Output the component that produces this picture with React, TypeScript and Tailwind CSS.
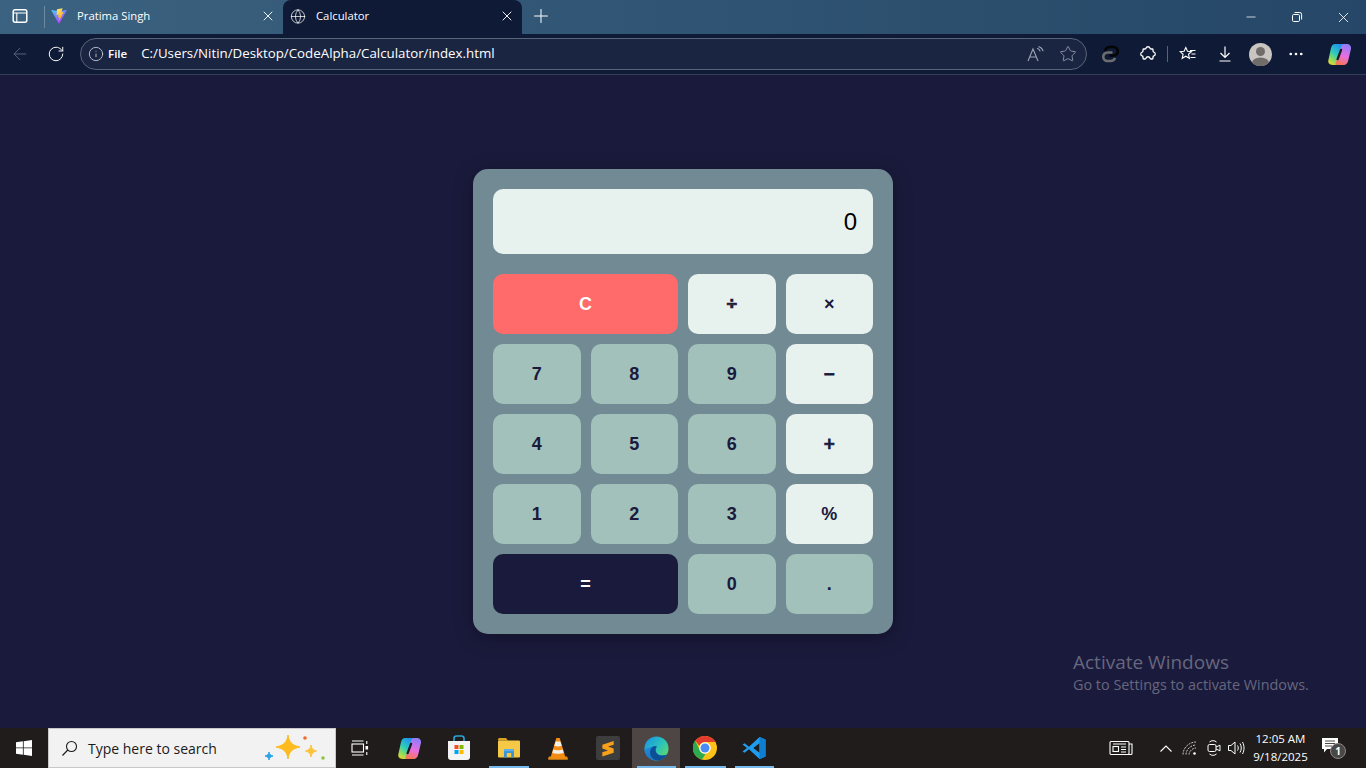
import React from "react";
import { ArrowLeft, Globe, Info, Minus, MoreHorizontal, Plus, RotateCw, Star, X } from "lucide-react";

const SEGOE = "font-['Open_Sans','Noto_Sans',sans-serif]";

function ViteLogo() {
  return (
    <svg width="18" height="18" viewBox="0 0 410 404">
      <defs>
        <linearGradient id="vg1" x1="0" y1="0" x2="0.6" y2="1">
          <stop offset="0" stopColor="#41d1ff" />
          <stop offset="1" stopColor="#bd34fe" />
        </linearGradient>
        <linearGradient id="vg2" x1="0" y1="0" x2="0.3" y2="1">
          <stop offset="0" stopColor="#ffea83" />
          <stop offset="1" stopColor="#ffa800" />
        </linearGradient>
      </defs>
      <path d="M399 63 215 392c-4 7-14 7-18 0L10 63c-4-7 2-16 11-15l184 33h7l180-33c9-1 15 8 11 15Z" fill="url(#vg1)" />
      <path d="M292 1 156 28c-2 0-4 2-4 5l-8 142c0 3 3 6 6 5l38-9c4-1 7 2 6 6l-11 55c-1 4 3 7 6 6l23-7c4-1 7 2 6 6l-18 86c-1 5 6 8 9 3l2-3 108-216c2-4-1-8-5-7l-39 7c-4 1-7-3-6-6l25-88c1-4-3-8-6-7Z" fill="url(#vg2)" />
    </svg>
  );
}

function TabsIcon() {
  return (
    <svg width="16" height="16" viewBox="0 0 16 16" fill="none" stroke="#fff" strokeWidth="1.5">
      <rect x="1.2" y="1.700" width="13.600" height="12.600" rx="2" />
      <path d="M1.500 5h13M4.800 5v9" strokeWidth="1.100" />
    </svg>
  );
}

function RestoreIcon() {
  return (
    <svg width="12" height="12" viewBox="0 0 12 12" fill="none" stroke="#fff" strokeWidth="1">
      <rect x="1.500" y="3.500" width="7" height="7" rx="1.200" />
      <path d="M3.600 1.500h5.200a1.800 1.800 0 0 1 1.800 1.800v5.200" />
    </svg>
  );
}

function ReadAloudIcon() {
  return (
    <svg width="18" height="16" viewBox="0 0 18 16" fill="none" stroke="#9aa3b2" strokeWidth="1.100">
      <path d="M1 15 6 3l5 12M2.800 11h6.400" />
      <path d="M10 2.200c1.600.4 2.800 1.600 3.200 3.200M11.500 0.600c2.300.5 4 2.300 4.600 4.600" />
    </svg>
  );
}

function ChainIcon() {
  return (
    <svg width="18" height="18" viewBox="0 0 18 18" fill="none" strokeWidth="2.600">
      <path d="M4 6c.6-2.500 2.500-4 5-4h3.500a4 4 0 0 1 0 8.500H8.500" stroke="#050505" />
      <path d="M11.500 7.500H6.500a4.200 4.200 0 0 0 0 8.500h3c2.200 0 3.900-1.200 4.500-3.200" stroke="#6e6e6e" />
    </svg>
  );
}

function PuzzleIcon() {
  return (
    <svg width="18" height="18" viewBox="0 0 18 18" fill="none" stroke="#fff" strokeWidth="1.300">
      <path d="M7 3.200a2.100 2.100 0 0 1 4 0c.1.500.5.800 1 .8h1.200c.5 0 .8.300.8.800V6c0 .5.300.9.800 1a2.100 2.100 0 0 1 0 4c-.5.100-.8.500-.8 1v1.200c0 .5-.3.800-.8.800H12c-.5 0-.9-.3-1-.8a2.100 2.100 0 0 0-4 0c-.1.500-.5.800-1 .8H4.800c-.5 0-.8-.3-.8-.8V12c0-.5-.3-.9-.8-1a2.100 2.100 0 0 1 0-4c.5-.1.800-.5.800-1V4.800c0-.5.300-.8.800-.8H6c.5 0 .9-.3 1-.8Z" />
    </svg>
  );
}

function FavoritesIcon() {
  return (
    <svg width="18" height="18" viewBox="0 0 18 18" fill="none" stroke="#fff" strokeWidth="1.100">
      <path d="m6.800 2.500 1.700 3.700 4 .4-3 2.700.9 4-3.600-2.100-3.600 2.100.9-4-3-2.700 4-.4Z" />
      <path d="M11 5.500h5.500M12.500 9h4M11.500 12.500h5" />
    </svg>
  );
}

function DownloadIcon() {
  return (
    <svg width="16" height="18" viewBox="0 0 16 18" fill="none" stroke="#fff" strokeWidth="1.200">
      <path d="M8 1.500v11M3.500 8 8 12.500 12.500 8M2.500 16h11" />
    </svg>
  );
}

function Avatar() {
  return (
    <div className="w-[23px] h-[23px] rounded-full overflow-hidden bg-[#c9c6c2]">
      <svg width="23" height="23" viewBox="0 0 23 23">
        <circle cx="11.500" cy="8.500" r="4.500" fill="#6f6c69" />
        <ellipse cx="11.500" cy="20" rx="8.500" ry="5.500" fill="#6f6c69" />
      </svg>
    </div>
  );
}

function CopilotIcon({ id }: { id: string }) {
  return (
    <svg width="25" height="25" viewBox="0 0 24 24">
      <defs>
        <linearGradient id={`${id}a`} x1="0.7" y1="0" x2="0.1" y2="1">
          <stop offset="0" stopColor="#1f8ff0" />
          <stop offset="0.45" stopColor="#2cc9c0" />
          <stop offset="0.75" stopColor="#8ede5a" />
          <stop offset="1" stopColor="#f7d430" />
        </linearGradient>
        <linearGradient id={`${id}b`} x1="0.6" y1="0" x2="0.3" y2="1">
          <stop offset="0" stopColor="#8f7cf8" />
          <stop offset="0.55" stopColor="#e86fe0" />
          <stop offset="1" stopColor="#f7764f" />
        </linearGradient>
      </defs>
      <path d="M8 2h7.500c1 0 1.500.7 1.200 1.600L11 20c-.5 1.500-1.500 2-3 2H5.500C2.500 22 .7 20 1.300 17.500L3.800 6C4.300 3.500 5.800 2 8 2Z" fill={`url(#${id}a)`} />
      <path d="M16 22H9.500c-1 0-1.500-.7-1.200-1.600L13.800 4c.5-1.500 1.500-2 3-2h2c2.900 0 4.800 2 4.200 4.600L20.300 18c-.5 2.500-2 4-4.300 4Z" fill={`url(#${id}b)`} />
      <path d="M13.500 7.500 10.200 16.500" stroke="#1a1820" strokeWidth="2.200" strokeLinecap="round" />
    </svg>
  );
}

function WindowsLogo() {
  return (
    <svg width="16" height="16" viewBox="0 0 16 16" fill="#fff">
      <path d="M0 2.300 6.900 1.300V7.500H0ZM7.700 1.200 16 0V7.500H7.700ZM0 8.300H6.900V14.700L0 13.700ZM7.700 8.300H16V16L7.700 14.800Z" />
    </svg>
  );
}

function SearchGlass() {
  return (
    <svg width="17" height="17" viewBox="0 0 17 17" fill="none" stroke="#1b1b1b" strokeWidth="1.100">
      <circle cx="10.500" cy="6.500" r="5" />
      <path d="M6.800 10 1.500 15.500" />
    </svg>
  );
}

function Sparkles() {
  return (
    <svg width="64" height="32" viewBox="0 0 64 32">
      <path d="M25 3c1 7 4 10.500 12 12-8 1.500-11 5-12 12-1-7-4-10.500-12-12 8-1.500 11-5 12-12Z" fill="#fdbb1f" stroke="#fdbb1f" strokeLinejoin="round" />
      <path d="M48 13c.5 3.500 1.800 5 5.500 6-3.700 1-5 2.500-5.500 6-.5-3.500-1.800-5-5.500-6 3.700-1 5-2.500 5.500-6Z" fill="#fdc33c" stroke="#fdc33c" strokeLinejoin="round" />
      <path d="M6 20c.4 2.300 1.200 3.200 4 4-2.800.8-3.600 1.700-4 4-.4-2.300-1.200-3.200-4-4 2.800-.8 3.600-1.700 4-4Z" fill="#2aa5ea" stroke="#2aa5ea" strokeLinejoin="round" />
      <circle cx="42" cy="6" r="1.800" fill="#ef6a2c" />
      <circle cx="60" cy="26" r="1.800" fill="#8cc63f" />
    </svg>
  );
}

function TaskViewIcon() {
  return (
    <svg width="18" height="16" viewBox="0 0 18 16" fill="none" stroke="#fff" strokeWidth="1.100">
      <rect x="1" y="4" width="11.500" height="8" />
      <path d="M1 1h11.500M1 15h11.500" />
      <path d="M15.800 1v3M15.800 12v3" />
      <rect x="14.500" y="6" width="2.600" height="3.500" fill="#fff" stroke="none" />
    </svg>
  );
}

function StoreIcon() {
  return (
    <svg width="24" height="26" viewBox="0 0 24 26">
      <path d="M7 6V3.500C7 2 8 1 9.500 1h5C16 1 17 2 17 3.500V6" fill="none" stroke="#2aa5d8" strokeWidth="1.600" />
      <path d="M1 6h22v16a3 3 0 0 1-3 3H4a3 3 0 0 1-3-3Z" fill="#f4f4f4" />
      <rect x="7.500" y="10" width="4" height="4" fill="#f25022" />
      <rect x="12.500" y="10" width="4" height="4" fill="#7fba00" />
      <rect x="7.500" y="15" width="4" height="4" fill="#00a4ef" />
      <rect x="12.500" y="15" width="4" height="4" fill="#ffb900" />
    </svg>
  );
}

function ExplorerIcon() {
  return (
    <svg width="22" height="20" viewBox="0 0 22 20">
      <path d="M0 1.500C0 .7.700 0 1.500 0H8l2 2.500H0Z" fill="#d9a21f" />
      <rect x="0" y="2.500" width="22" height="17" rx="1" fill="#f5c945" />
      <path d="M6 19.500v-6c0-1 .7-1.500 1.500-1.500h7c.8 0 1.500.5 1.500 1.500v6h-2.800v-4.500H8.800v4.500Z" fill="#3a93d8" />
      <rect x="6" y="11" width="10" height="2.200" fill="#5bb0ea" />
    </svg>
  );
}

function VlcIcon() {
  return (
    <svg width="20" height="23" viewBox="0 0 20 23">
      <path d="M1 19.500h18l1 2.200c0 .5-.5 1-1 1H1c-.5 0-1-.5-1-1Z" fill="#e38a12" />
      <path d="M8.300 1h3.400l5.800 19.500c-3 1.300-12 1.300-15 0Z" fill="#f28c13" />
      <path d="M7.600 4.500h4.800l1.300 4.300c-2 .8-5.400.8-7.400 0ZM5.300 12.500c2.500 1 6.900 1 9.400 0l1 3.500c-3 1.100-8.400 1.100-11.400 0Z" fill="#f1efe9" />
    </svg>
  );
}

function SublimeIcon() {
  return (
    <div className="w-6 h-6 rounded-[2px] bg-[#3d3d3d] flex items-center justify-center">
      <svg width="14" height="17" viewBox="0 0 14 18" fill="#f9a01b">
        <path d="M1 5 13 1v4L7 7l6 2v4.500L1 17.500v-4.500L7 11 1 9Z" />
      </svg>
    </div>
  );
}

function EdgeIcon() {
  return (
    <svg width="25" height="25" viewBox="0 0 25 25">
      <defs>
        <linearGradient id="eg1" x1="0.2" y1="0" x2="1" y2="0.7">
          <stop offset="0" stopColor="#1a9be0" />
          <stop offset="0.55" stopColor="#2cc3b8" />
          <stop offset="1" stopColor="#5bd86f" />
        </linearGradient>
        <linearGradient id="eg2" x1="0" y1="0" x2="0.5" y2="1">
          <stop offset="0" stopColor="#1f8fe0" />
          <stop offset="1" stopColor="#1a6fc4" />
        </linearGradient>
      </defs>
      <circle cx="12.500" cy="12.500" r="12" fill="url(#eg1)" />
      <path d="M.5 12.500C.5 19 5.500 24.500 12.500 24.500c4 0 8-2 10.500-6-3 1.500-7 1.500-9.500-.5-2-1.700-2.500-5-.5-7.500-1.500-.8-4-.8-6 .5C5 12 3 13 .5 12.500Z" fill="url(#eg2)" />
      <path d="M12.800 10.500c-2 2.500-1.500 5.800.7 7.500 2.500 2 6.500 2 9.500.5-1.800 3.500-5.500 6-9.500 6 0 0-3.500-.5-5.500-3-2.500-3-2.500-7.500 0-10 1.200-1.300 3-1.700 4.800-1Z" fill="#0b4f96" />
    </svg>
  );
}

function ChromeIcon() {
  return (
    <svg width="24" height="24" viewBox="0 0 24 24">
      <circle cx="12" cy="12" r="12" fill="#fbc116" />
      <path d="M12 0a12 12 0 0 1 10.400 6H12a6 6 0 0 0-5.600 3.700L2.200 4.600A12 12 0 0 1 12 0Z" fill="#e33b2e" />
      <path d="M2.200 4.600 7.300 15.500a6 6 0 0 0 5.200 2.500L9 23.600A12 12 0 0 1 2.200 4.600Z" fill="#2da94f" />
      <circle cx="12" cy="12" r="5.800" fill="#fff" />
      <circle cx="12" cy="12" r="4.500" fill="#4a8bf5" />
    </svg>
  );
}

function VsCodeIcon() {
  return (
    <svg width="24" height="24" viewBox="0 0 24 24">
      <path d="M17.500 1 23.500 3.500v17L17.500 23 7 13.300 2.600 16.800.5 15.600 5 12 .5 8.400l2.100-1.200L7 10.700Zm0 6.200L11.300 12l6.200 4.800Z" fill="#1f9cf0" />
      <path d="M17.500 1 23.500 3.500v17L17.500 23Z" fill="#0e7fd0" />
    </svg>
  );
}

function NewsIcon() {
  return (
    <svg width="24" height="16" viewBox="0 0 24 16" fill="none" stroke="#fff" strokeWidth="1.100">
      <rect x="1" y="1.500" width="19" height="13" rx="1" />
      <path d="M20 4h3v9.500a1 1 0 0 1-1 1h-3" />
      <rect x="4" y="6.500" width="5.500" height="5" />
      <path d="M4 4h13M12 7h5M12 9.500h5M12 12h5" />
    </svg>
  );
}

function WifiIcon() {
  return (
    <svg width="16" height="16" viewBox="0 0 16 16" fill="none" stroke="#c9c9c9" strokeWidth="1">
      <path d="M1 14.500C1 8 7 2 14 2M4 14.500c0-5 5-9.500 10-9.500M7 14.500c0-3 3.500-6.500 7-6.500" strokeDasharray="2 1" />
      <circle cx="12.500" cy="13.500" r="1.300" fill="#fff" stroke="none" />
    </svg>
  );
}

function MeetIcon() {
  return (
    <svg width="14" height="18" viewBox="0 0 14 18" fill="none" stroke="#fff" strokeWidth="1">
      <rect x="1" y="5.500" width="8" height="7" rx="1.500" />
      <path d="m9 8 4-1.800v5.600L9 10" />
      <path d="M2.500 3c2-1.800 5-1.800 7 0M2.500 15c2 1.800 5 1.800 7 0" />
    </svg>
  );
}

function VolumeIcon() {
  return (
    <svg width="18" height="16" viewBox="0 0 18 16" fill="none" stroke="#fff" strokeWidth="1">
      <path d="M1.500 5.500H4L8 2v12l-4-3.500H1.500Z" />
      <path d="M10.500 5.500c1 1.500 1 3.500 0 5M13 3.500c1.700 2.700 1.700 6.300 0 9M15.500 2c2 3.800 2 8.200 0 12" />
    </svg>
  );
}

function NotificationIcon() {
  return (
    <div className="relative w-[22px] h-[22px]">
      <svg width="16" height="15" viewBox="0 0 16 15" className="mt-[1px]" fill="#fff">
        <path d="M0 0h16v11H5l-3 3.500V11H0Z" />
        <path d="M3 3h10M3 5.500h10M3 8h7" stroke="#1f1c1b" strokeWidth="0.800" />
      </svg>
      <div className="absolute left-[8px] top-[6px] w-[16px] h-[16px] rounded-full bg-[#4a4846] border border-[#8a8886] flex items-center justify-center text-[10px] leading-none font-bold text-white">
        1
      </div>
    </div>
  );
}

function Tab({ title, icon, active }: { title: string; icon: React.ReactNode; active?: boolean }) {
  return (
    <div className={`h-[34px] flex items-center pb-[2px] pr-[7px] rounded-t-lg ${active ? "w-[239px] pl-[7px] bg-[#0e1a36]" : "w-[238px] pl-[6px]"}`}>
      <div className="w-[16px] flex justify-center">{icon}</div>
      <span className="ml-[10px] flex-1 text-[11.3px] text-white">{title}</span>
      <X size={16} color="#ffffff" strokeWidth={1.4} />
    </div>
  );
}

function Key({ label, kind = "num", wide, heavy }: { label: string; kind?: "num" | "op" | "clear" | "eq"; wide?: boolean; heavy?: boolean }) {
  const colors = {
    num: "bg-[#a2c1ba] text-[#1a1a3c]",
    op: "bg-[#e7f1ed] text-[#1a1a3c]",
    clear: "bg-[#ff6b6b] text-white",
    eq: "bg-[#1a1a3c] text-white",
  }[kind];
  // the operators come out too thin next to the reference
  const font = heavy
    ? "text-[15px] font-['DejaVu_Sans',sans-serif] [-webkit-text-stroke:0.7px_#1a1a3c]"
    : "text-lg font-['Liberation_Sans',Arial,sans-serif]";
  return (
    <button className={`h-[60px] rounded-[10px] font-bold ${font} ${colors} ${wide ? "col-span-2" : ""}`}>
      {label}
    </button>
  );
}

function Slot({ w, active, running, children }: { w: string; active?: boolean; running?: boolean; children: React.ReactNode }) {
  return (
    <div className={`relative h-10 flex items-center justify-center ${w} ${active ? "bg-[#4d4645]" : ""}`}>
      {children}
      {running && <div className="absolute bottom-0 left-[5px] right-[4px] h-[2px] bg-[#76b9ed]" />}
    </div>
  );
}

export default function App() {
  return (
    <div className={`w-[1366px] h-[768px] overflow-hidden flex flex-col bg-[#1a1a3c] ${SEGOE}`}>
      {/* tab strip */}
      <div className="h-[34px] flex items-end bg-gradient-to-r from-[#3b6280] to-[#264767]">
        <div className="w-[44px] h-full flex items-center justify-center pr-[4px] pb-[2px]">
          <TabsIcon />
        </div>
        <div className="w-px h-[22px] mb-[6px] bg-[#6e8aa0]" />
        <Tab title="Pratima Singh" icon={<ViteLogo />} />
        <Tab title="Calculator" active icon={<Globe size={19} color="#ffffff" strokeWidth={1.1} />} />
        <div className="w-[38px] h-full flex items-center justify-center pb-[2px]">
          <Plus size={22} color="#ffffff" strokeWidth={1.1} />
        </div>
        <div className="ml-auto h-full flex items-center">
          <div className="w-[46px] flex justify-center"><Minus size={14} color="#ffffff" strokeWidth={1.3} /></div>
          <div className="w-[46px] flex justify-center"><RestoreIcon /></div>
          <div className="w-[46px] flex justify-center"><X size={17} color="#ffffff" strokeWidth={1.2} /></div>
        </div>
      </div>

      {/* toolbar */}
      <div className="h-[41px] flex items-center bg-[#0e1a36] border-b border-[#333f58]">
        <div className="w-[40px] flex justify-center"><ArrowLeft size={20} color="#5f6a80" strokeWidth={1.1} /></div>
        <div className="w-[32px] flex justify-center"><RotateCw size={18} color="#ffffff" strokeWidth={1.3} /></div>
        <div className="ml-[8px] w-[1007px] h-[32px] rounded-full border border-[#5a6478] bg-[#1a2542] flex items-center">
          <div className="w-[22px] ml-[1px] flex justify-end"><Info size={16} color="#d6d9df" strokeWidth={1.2} /></div>
          <span className="ml-[4px] text-[11.5px] font-semibold text-white">File</span>
          <span className="ml-[14px] flex-1 text-[13.3px] text-white">C:/Users/Nitin/Desktop/CodeAlpha/Calculator/index.html</span>
          <div className="w-[32px] flex justify-center"><ReadAloudIcon /></div>
          <div className="w-[32px] mr-[2px] flex justify-center"><Star size={18} color="#9aa3b2" strokeWidth={1.1} /></div>
        </div>
        <div className="ml-[5px] flex items-center">
          <div className="w-[36px] flex justify-center"><ChainIcon /></div>
          <div className="w-[39px] flex justify-center"><PuzzleIcon /></div>
          <div className="w-px h-[16px] bg-[#59637a]" />
          <div className="w-[40px] flex justify-center"><FavoritesIcon /></div>
          <div className="w-[33px] flex justify-center"><DownloadIcon /></div>
          <div className="w-[38px] flex justify-center"><Avatar /></div>
          <div className="w-[34px] flex justify-center"><MoreHorizontal size={18} color="#ffffff" strokeWidth={1.6} /></div>
          <div className="w-[52px] flex justify-center"><CopilotIcon id="cpt" /></div>
        </div>
      </div>

      {/* page */}
      <main className="relative flex-1 flex items-center justify-center">
        <div className="w-[420px] p-5 rounded-[15px] bg-[#728a93] shadow-[0_4px_20px_rgba(0,0,0,0.3)]">
          <div className="h-[65px] mb-5 px-4 rounded-[10px] bg-[#e7f1ed] flex items-center justify-end text-2xl text-black font-['Liberation_Sans',Arial,sans-serif]">
            0
          </div>
          <div className="grid grid-cols-4 gap-[10px]">
            <Key label="C" kind="clear" wide />
            <Key label="÷" kind="op" heavy />
            <Key label="×" kind="op" />
            <Key label="7" />
            <Key label="8" />
            <Key label="9" />
            <Key label="−" kind="op" heavy />
            <Key label="4" />
            <Key label="5" />
            <Key label="6" />
            <Key label="+" kind="op" heavy />
            <Key label="1" />
            <Key label="2" />
            <Key label="3" />
            <Key label="%" kind="op" />
            <Key label="=" kind="eq" wide />
            <Key label="0" />
            <Key label="." />
          </div>
        </div>
        <div className="absolute left-[1073px] top-[574px] text-[#66677e]">
          <div className="text-[19px] leading-[26px]">Activate Windows</div>
          <div className="text-[14.4px] leading-[20px]">Go to Settings to activate Windows.</div>
        </div>
      </main>

      {/* taskbar */}
      <div className="h-10 flex items-center bg-[#1f1c1b]">
        <div className="w-12 flex justify-center"><WindowsLogo /></div>
        <div className="w-[288px] h-10 flex items-center bg-[#f2f2f2] border border-[#c8c8c8] pl-[12px] pr-[8px]">
          <SearchGlass />
          <span className="ml-[10px] flex-1 text-[14px] text-[#1b1b1b]">Type here to search</span>
          <Sparkles />
        </div>
        <Slot w="w-[48px]"><TaskViewIcon /></Slot>
        <Slot w="w-[50px]"><CopilotIcon id="cpb" /></Slot>
        <Slot w="w-[50px]"><StoreIcon /></Slot>
        <Slot w="w-[49px]" running><ExplorerIcon /></Slot>
        <Slot w="w-[50px]"><VlcIcon /></Slot>
        <Slot w="w-[49px]"><SublimeIcon /></Slot>
        <Slot w="w-[48px]" active running><EdgeIcon /></Slot>
        <Slot w="w-[50px]" running><ChromeIcon /></Slot>
        <Slot w="w-[48px]" running><VsCodeIcon /></Slot>

        <div className="ml-auto flex items-center">
          <div className="w-[34px] flex justify-center"><NewsIcon /></div>
          <div className="w-[16px]" />
          <div className="w-[24px] flex justify-center">
            <svg width="12" height="7" viewBox="0 0 12 7" fill="none" stroke="#fff" strokeWidth="1.100"><path d="M.5 6.500 6 1l5.500 5.500" /></svg>
          </div>
          <div className="w-[24px] flex justify-center"><WifiIcon /></div>
          <div className="w-[23px] flex justify-center"><MeetIcon /></div>
          <div className="w-[22px] flex justify-center"><VolumeIcon /></div>
          <div className="w-[67px] text-center text-[11.5px] leading-[18px] text-white">
            <div>12:05 AM</div>
            <div>9/18/2025</div>
          </div>
          <div className="w-[38px] flex justify-center"><NotificationIcon /></div>
          <div className="w-[14px]" />
        </div>
      </div>
    </div>
  );
}
